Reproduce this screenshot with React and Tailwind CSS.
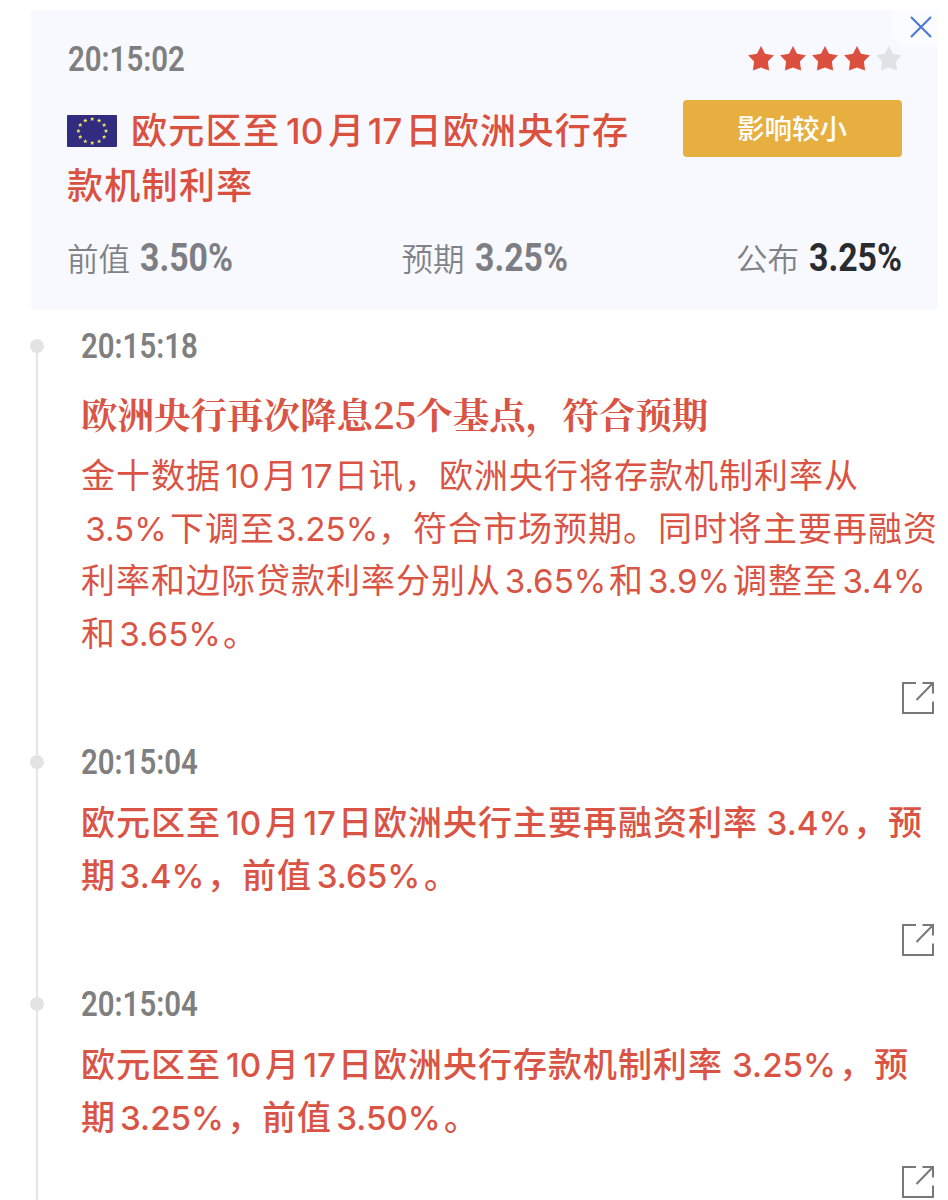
import { clsx } from 'clsx';

const CONDENSED = 'font-["Roboto",sans-serif]';

const Num = ({ w, pad = 'pl-px', children }) => (
  <span className={clsx('inline-block text-center tracking-normal', w, pad)}>
    <span className="text-[0.975em]">{children}</span>
  </span>
);

const Line = ({ className, children }) => (
  <span className={clsx('block whitespace-nowrap', className)}>{children}</span>
);

const Star = ({ active }) => (
  <svg viewBox="0 0 26 25" className={clsx('h-[25px] w-[26px]', active ? 'fill-[#dc4f3e]' : 'fill-[#e1e2e6]')}>
    <path d="M13 0l4 7.800 8.900 1.400-6 6.300 1.200 9.100-8.100-3.100-8.100 3.100 1.200-9.100-6-6.300L9 7.800z" />
  </svg>
);

const STAR_POINTS = '0,-2.3 0.65,-0.75 2.2,-0.7 1,0.3 1.4,1.9 0,0.95 -1.4,1.9 -1,0.3 -2.2,-0.7 -0.65,-0.75';

const EuFlag = () => (
  <svg viewBox="0 0 50 32" className="-mt-[2px] mr-[14px] h-8 w-[50px] shrink-0">
    <rect width="50" height="32" rx="1" fill="#312c80" />
    {Array.from({ length: 12 }, (_, index) => {
      const angle = (index * Math.PI) / 6;
      const x = 25.2 + 13.8 * Math.sin(angle);
      const y = 16 - 12 * Math.cos(angle);
      return <polygon key={index} points={STAR_POINTS} fill="#f3ea62" transform={`translate(${x} ${y})`} />;
    })}
  </svg>
);

const ShareIcon = () => (
  <svg viewBox="0 0 34 34" className="h-[34px] w-[34px]" fill="none" stroke="#77787a" strokeWidth="2">
    <path d="M15 2H2v30h30V20.500M21.500 2H32v10.500M32 2L15.500 19" />
  </svg>
);

const Figure = ({ label, value, strong, className }) => (
  <div className={clsx('flex h-10 w-[166px] items-center', className)}>
    <span className="w-[73px] shrink-0 pt-[3px] text-[31.500px] font-[350] text-[#808287]">{label}</span>
    <span
      className={clsx(
        CONDENSED,
        'origin-left scale-x-[0.89] pt-px text-[38px] font-bold',
        strong ? 'text-[#2a2b2e]' : 'text-[#7c7e83]',
      )}
    >
      {value}
    </span>
  </div>
);

const Time = ({ className, children }) => (
  <time
    className={clsx(
      CONDENSED,
      'block origin-left scale-x-[0.84] text-[35px] font-semibold tracking-normal text-[#7f7f80]',
      className,
    )}
  >
    {children}
  </time>
);

const TimelineItem = ({ time, height, children }) => (
  <li className={clsx('flex shrink-0', height)}>
    <div className="flex w-[14px] shrink-0 flex-col items-center">
      <span className="h-[14px] w-[14px] rounded-full bg-[#e3e3e4]" />
      <span className="w-[2px] flex-1 bg-[#e5e5e6]" />
    </div>
    <div className="ml-[37px] flex w-[855px] flex-col">
      <Time className="pt-px leading-[14px]">{time}</Time>
      {children}
      <div className="mt-auto mb-[40px] flex justify-end pr-px">
        <ShareIcon />
      </div>
    </div>
  </li>
);

const SummaryCard = () => (
  <section className="relative ml-[31px] h-[299px] w-[907px] shrink-0 rounded-[3px] bg-[#f8f9fe] pt-[36px] pr-[36px] pl-[37px]">
    <button className="absolute top-0 right-0 flex h-[36px] w-[46px] items-center justify-end rounded-bl-[18px] bg-[#fbfcff]">
      <svg viewBox="0 0 22 22" className="mr-[6px] mb-[2px] h-[22px] w-[22px]" stroke="#4a75d6" strokeWidth="2">
        <path d="M1 1l20 20M21 1L1 21" />
      </svg>
    </button>

    <div className="flex h-[26px] items-center justify-between">
      <Time className="pt-[2px] leading-[26px]">20:15:02</Time>
      <div className="flex gap-[6px] pb-[2px]">
        {[1, 2, 3, 4, 5].map((star) => (
          <Star key={star} active={star <= 4} />
        ))}
      </div>
    </div>

    <div className="mt-[28px] flex items-start justify-between">
      <h1 className="-ml-px pt-[4px] text-[36px] leading-[55px] font-medium tracking-[1.3px] text-[#da5140]">
        <span className="flex items-center whitespace-nowrap">
          <EuFlag />
          <span>
            欧元区至<Num w="w-[48px]">10</Num>月<Num w="w-[40px]" pad="pr-px">17</Num>日欧洲央行存
          </span>
        </span>
        <Line>款机制利率</Line>
      </h1>
      <span className="flex h-[57px] w-[219px] items-center justify-center rounded-[4px] bg-[#e7ae40] pt-[2px] pr-px text-[27.500px] font-medium text-white">
        影响较小
      </span>
    </div>

    <div className="mt-[24px] -ml-px flex justify-between">
      <Figure label="前值" value="3.50%" />
      <Figure label="预期" value="3.25%" />
      <Figure label="公布" value="3.25%" strong />
    </div>
  </section>
);

const App = () => {
  return (
    <main className='flex h-[1200px] w-[948px] flex-col overflow-hidden bg-white pt-[10px] font-["Inter","Noto_Sans_CJK_SC",sans-serif]'>
      <SummaryCard />

      <ol className="mt-[30px] ml-[30px] flex flex-col text-[34px] leading-[52.5px] tracking-[1px] text-[#da5445]">
        <TimelineItem time="20:15:18" height="h-[416px]">
          <h2 className='mt-[33px] h-[52px] font-["Noto_Serif_CJK_SC","Noto_Serif_SC",serif] text-[36.500px] leading-[52px] font-bold tracking-normal whitespace-nowrap'>
            欧洲央行再次降息25个基点，符合预期
          </h2>
          <p className="mt-[11px] font-normal">
            <Line>
              金十数据<Num w="w-[42px]">10</Num>月<Num w="w-[36px]">17</Num>日讯，欧洲央行将存款机制利率从
            </Line>
            <Line>
              <Num w="w-[89px]">3.5%</Num>下调至<Num w="w-[103px]">3.25%</Num>，符合市场预期。同时将主要再融资
            </Line>
            <Line>
              利率和边际贷款利率分别从<Num w="w-[108px]">3.65%</Num>和<Num w="w-[89px]">3.9%</Num>调整至
              <Num w="w-[91px]">3.4%</Num>
            </Line>
            <Line>
              和<Num w="w-[107px]">3.65%</Num>。
            </Line>
          </p>
        </TimelineItem>

        <TimelineItem time="20:15:04" height="h-[242px]">
          <p className="mt-[27px] font-medium">
            <Line>
              欧元区至<Num w="w-[44px]">10</Num>月<Num w="w-[38px]">17</Num>日欧洲央行主要再融资利率
              <Num w="w-[95px]" pad="pl-[7px]">3.4%</Num>，预
            </Line>
            <Line>
              期<Num w="w-[91px]">3.4%</Num>，前值<Num w="w-[112px]">3.65%</Num>。
            </Line>
          </p>
        </TimelineItem>

        <TimelineItem time="20:15:04" height="h-[242px]">
          <p className="mt-[27px] font-medium">
            <Line>
              欧元区至<Num w="w-[44px]">10</Num>月<Num w="w-[38px]">17</Num>日欧洲央行存款机制利率
              <Num w="w-[116px]" pad="pl-[6px]">3.25%</Num>，预
            </Line>
            <Line>
              期<Num w="w-[111px]">3.25%</Num>，前值<Num w="w-[112px]">3.50%</Num>。
            </Line>
          </p>
        </TimelineItem>
      </ol>
    </main>
  );
};

export default App;
